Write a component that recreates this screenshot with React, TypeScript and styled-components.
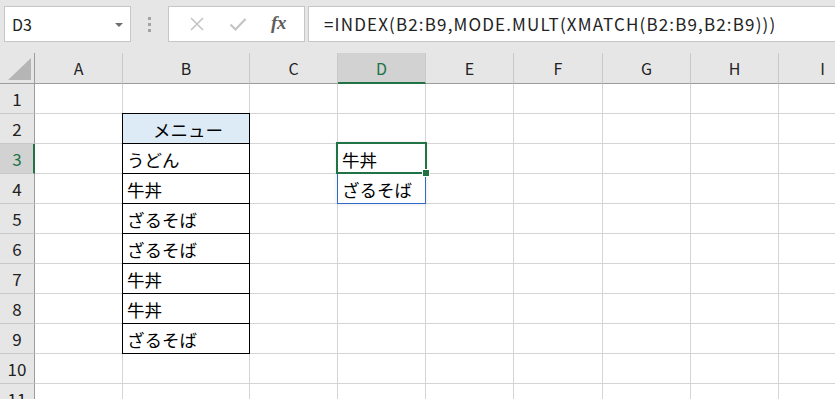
import styled, { createGlobalStyle } from "styled-components";

const GlobalStyle = createGlobalStyle`
  body {
    margin: 0;
    overflow: hidden;
    font-family: "Noto Sans CJK JP", "Noto Sans", sans-serif;
  }
`;

const COLUMNS = [
  { name: "A", width: 88 },
  { name: "B", width: 127 },
  { name: "C", width: 88 },
  { name: "D", width: 88 },
  { name: "E", width: 88 },
  { name: "F", width: 89 },
  { name: "G", width: 88 },
  { name: "H", width: 88 },
  { name: "I", width: 88 },
];

const ROW_COUNT = 11;

const CELLS: Record<string, string> = {
  B2: "メニュー",
  B3: "うどん",
  B4: "牛丼",
  B5: "ざるそば",
  B6: "ざるそば",
  B7: "牛丼",
  B8: "牛丼",
  B9: "ざるそば",
  D3: "牛丼",
  D4: "ざるそば",
};

const isTable = (col: string, row: number) => col === "B" && row >= 2 && row <= 9;

export default function App() {
  return (
    <>
      <GlobalStyle />
      <Window>
        <Toolbar>
          <NameBox>
            D3
            <Caret />
          </NameBox>
          <Grip>
            <span />
            <span />
            <span />
          </Grip>
          <IconBox>
            <svg width="16" height="16" viewBox="0 0 16 16">
              <path d="M2 2 L14 14 M14 2 L2 14" stroke="#c4c4c4" strokeWidth="1.6" fill="none" />
            </svg>
            <svg width="18" height="16" viewBox="0 0 18 16">
              <path d="M1.5 8.5 L6.5 13.5 L16.5 3" stroke="#c4c4c4" strokeWidth="2.2" fill="none" />
            </svg>
            <Fx>fx</Fx>
          </IconBox>
          <FormulaInput>=INDEX(B2:B9,MODE.MULT(XMATCH(B2:B9,B2:B9)))</FormulaInput>
        </Toolbar>

        <Sheet>
          <Corner>
            <svg width="23" height="22" viewBox="0 0 23 22">
              <path d="M23 0 L23 22 L0 22 Z" fill="#b5b5b5" />
            </svg>
          </Corner>
          {COLUMNS.map((c) => (
            <ColHeader key={c.name} $active={c.name === "D"}>
              {c.name}
            </ColHeader>
          ))}
          {Array.from({ length: ROW_COUNT }, (_, i) => i + 1).map((row) => (
            <Row key={row}>
              <RowHeader $active={row === 3}>{row}</RowHeader>
              {COLUMNS.map((c) => {
                const ref = `${c.name}${row}`;
                const table = isTable(c.name, row);
                return (
                  <Cell
                    key={ref}
                    $table={table}
                    $top={table && row === 2}
                    $head={ref === "B2"}
                    $relative={ref === "D3"}
                  >
                    {CELLS[ref]}
                    {ref === "D3" && (
                      <>
                        <SpillRange />
                        <Selection />
                        <FillHandle />
                      </>
                    )}
                  </Cell>
                );
              })}
            </Row>
          ))}
        </Sheet>
      </Window>
    </>
  );
}

const Window = styled.div`
  width: 835px;
  height: 399px;
  overflow: hidden;
  background: #fff;
  display: flex;
  flex-direction: column;
`;

const Toolbar = styled.div`
  height: 53px;
  flex: none;
  background: #e6e6e6;
  display: flex;
  align-items: flex-start;
  padding: 6px 0 0 4px;
  box-sizing: border-box;
`;

const NameBox = styled.div`
  width: 127px;
  height: 36px;
  box-sizing: border-box;
  background: #fff;
  border: 1px solid #c6c6c6;
  display: flex;
  align-items: center;
  justify-content: space-between;
  padding: 0 7px 1px 7px;
  font-size: 16px;
  color: #222;
`;

const Caret = styled.span`
  width: 0;
  height: 0;
  border-left: 4px solid transparent;
  border-right: 4px solid transparent;
  border-top: 4px solid #6e6e6e;
  margin-top: 2px;
`;

const Grip = styled.div`
  width: 37px;
  height: 36px;
  display: flex;
  flex-direction: column;
  align-items: center;
  justify-content: center;
  gap: 3px;

  span {
    width: 3px;
    height: 3px;
    background: #a3a3a3;
  }
`;

const IconBox = styled.div`
  width: 137px;
  height: 36px;
  box-sizing: border-box;
  background: #fff;
  border: 1px solid #c6c6c6;
  display: flex;
  align-items: center;
  justify-content: space-around;
  padding: 0 6px 0 8px;
`;

const Fx = styled.span`
  font-family: "Liberation Serif", "DejaVu Serif", serif;
  font-style: italic;
  font-weight: bold;
  font-size: 19px;
  color: #5e5e5e;
  letter-spacing: -0.5px;
  margin-top: -3px;
`;

const FormulaInput = styled.div`
  flex: 1;
  height: 36px;
  margin-left: 3px;
  box-sizing: border-box;
  background: #fff;
  border: 1px solid #c6c6c6;
  border-right: none;
  display: flex;
  align-items: center;
  padding: 0 0 1px 15px;
  font-size: 17px;
  letter-spacing: 1.15px;
  color: #222;
  white-space: nowrap;
`;

const Sheet = styled.div`
  display: grid;
  grid-template-columns: 35px ${COLUMNS.map((c) => `${c.width}px`).join(" ")};
  grid-template-rows: 31px repeat(${ROW_COUNT}, 30px);
`;

const Row = styled.div`
  display: contents;
`;

const Corner = styled.div`
  background: #e6e6e6;
  border-right: 1px solid #9c9c9c;
  border-bottom: 1px solid #9c9c9c;
  box-sizing: border-box;
  display: flex;
  align-items: flex-end;
  justify-content: flex-end;
  padding: 0 3px 3px 0;
`;

const ColHeader = styled.div<{ $active?: boolean }>`
  box-sizing: border-box;
  background: ${({ $active }) => ($active ? "#d2d2d2" : "#e6e6e6")};
  color: ${({ $active }) => ($active ? "#217346" : "#222")};
  border-right: 1px solid #c9c9c9;
  border-bottom: ${({ $active }) => ($active ? "2px solid #217346" : "1px solid #9c9c9c")};
  display: flex;
  align-items: center;
  justify-content: center;
  font-size: 16px;
  padding-top: ${({ $active }) => ($active ? "1px" : "0")};
`;

const RowHeader = styled.div<{ $active?: boolean }>`
  box-sizing: border-box;
  background: ${({ $active }) => ($active ? "#d2d2d2" : "#e6e6e6")};
  color: ${({ $active }) => ($active ? "#217346" : "#222")};
  border-right: ${({ $active }) => ($active ? "2px solid #217346" : "1px solid #9c9c9c")};
  border-bottom: 1px solid #c9c9c9;
  display: flex;
  align-items: center;
  justify-content: center;
  font-size: 17px;
  padding-left: ${({ $active }) => ($active ? "1px" : "0")};
`;

const Cell = styled.div<{ $table?: boolean; $top?: boolean; $head?: boolean; $relative?: boolean }>`
  position: ${({ $relative }) => ($relative ? "relative" : "static")};
  box-sizing: border-box;
  background: ${({ $head }) => ($head ? "#ddebf7" : "#fff")};
  border-right: 1px solid ${({ $table }) => ($table ? "#000" : "#d4d4d4")};
  border-bottom: 1px solid ${({ $table }) => ($table ? "#000" : "#d4d4d4")};
  box-shadow: ${({ $table, $top }) =>
    $top
      ? "-1px 0 0 #000, 0 -1px 0 #000, -1px -1px 0 #000"
      : $table
      ? "-1px 0 0 #000"
      : "none"};
  display: flex;
  align-items: center;
  justify-content: ${({ $head }) => ($head ? "center" : "flex-start")};
  padding: 2px 0 0 4px;
  font-size: 17.5px;
  color: #000;
  white-space: nowrap;
`;

const SpillRange = styled.div`
  position: absolute;
  left: -1px;
  top: -1px;
  width: 89px;
  height: 61px;
  box-sizing: border-box;
  border: 1px solid #2f6cc9;
  box-shadow: 0 0 4px rgba(0, 0, 0, 0.12);
  pointer-events: none;
`;

const Selection = styled.div`
  position: absolute;
  left: -2px;
  top: -2px;
  width: 91px;
  height: 32px;
  box-sizing: border-box;
  border: 2px solid #217346;
  pointer-events: none;
`;

const FillHandle = styled.div`
  position: absolute;
  left: 85px;
  top: 26px;
  width: 6px;
  height: 6px;
  background: #217346;
  box-shadow: 0 0 0 1px #fff;
`;
